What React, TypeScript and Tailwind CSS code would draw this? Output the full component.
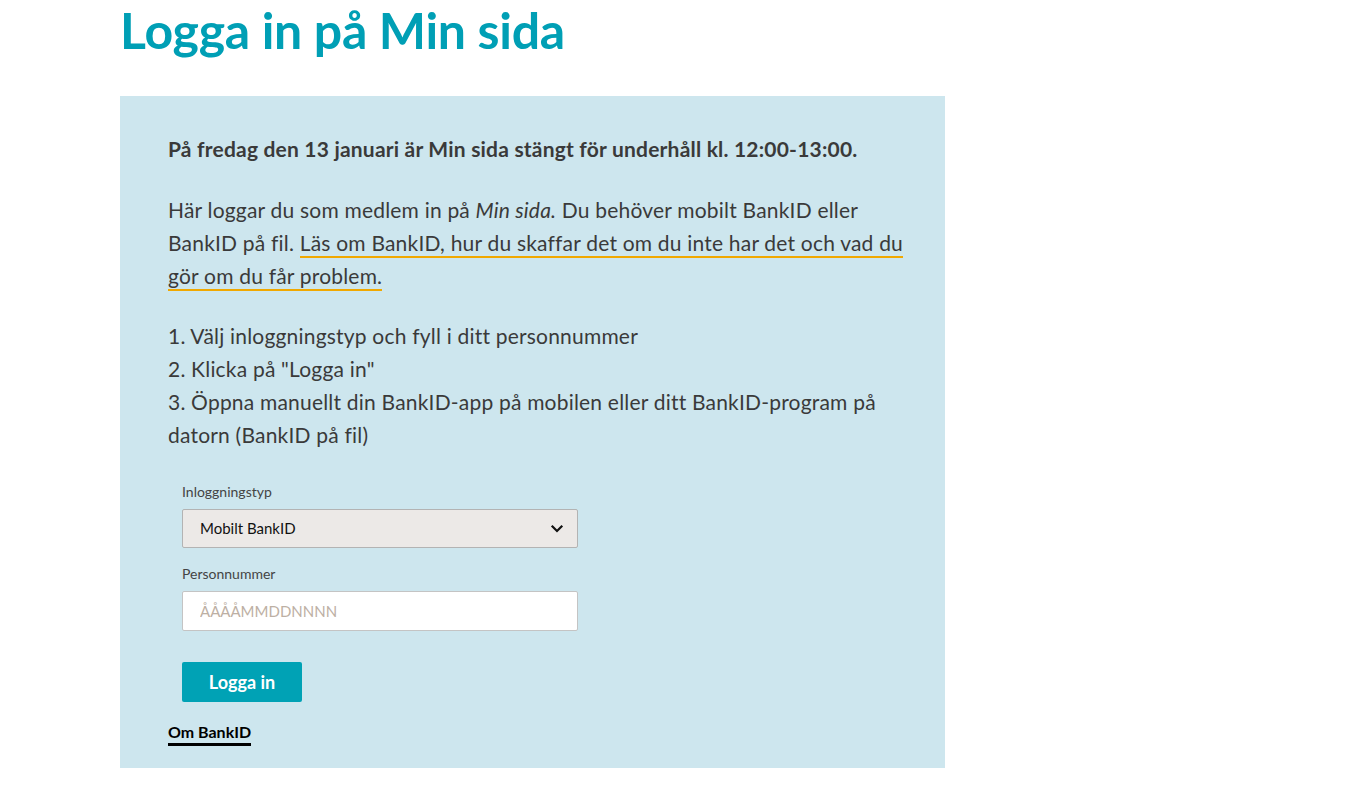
import React, { useEffect, useRef } from 'react';

const font = { fontFamily: 'Lato, "Open Sans", sans-serif' };

const ChevronDown = () => (
  <svg width="14" height="14" viewBox="0 0 14 14" fill="none">
    <path d="M2.5 4.5 7 9l4.5-4.5" stroke="#111" strokeWidth="2.2" strokeLinecap="square" />
  </svg>
);

const App: React.FC = () => {
  const scroller = useRef<HTMLDivElement>(null);

  // the reference is scrolled down a bit past the site header
  useEffect(() => {
    if (scroller.current) scroller.current.scrollTop = 200;
  }, []);

  return (
    <div ref={scroller} className="h-[800px] overflow-y-scroll bg-white" style={font}>
      <div className="h-[1945px]">
        <div className="h-[200px]" />
        <div className="pl-[120px]">
          <h1 className="text-[50px] font-bold leading-[62px] text-[#009fb5] -mt-[1px] tracking-[-0.3px]">
            Logga in på Min sida
          </h1>

          <div className="mt-[35px] w-[825px] bg-[#cde6ee] pl-[48px] pr-[40px] pt-[36px] pb-[22px] text-[#3a3a3a]">
            <p className="text-[21px] font-bold leading-[33px] tracking-[0.2px]">
              På fredag den 13 januari är Min sida stängt för underhåll kl. 12:00-13:00.
            </p>

            <p className="mt-[28px] text-[21px] leading-[33px] tracking-[0.2px]">
              Här loggar du som medlem in på <em>Min sida.</em> Du behöver mobilt BankID eller BankID på fil.{' '}
              <a href="#" className="border-b-2 border-[#f0a800] pb-[1px]">
                Läs om BankID, hur du skaffar det om du inte har det och vad du gör om du får problem.
              </a>
            </p>

            <ol className="mt-[27px] text-[21px] leading-[33px] tracking-[0.2px]">
              <li>1. Välj inloggningstyp och fyll i ditt personnummer</li>
              <li>2. Klicka på "Logga in"</li>
              <li>3. Öppna manuellt din BankID-app på mobilen eller ditt BankID-program på datorn (BankID på fil)</li>
            </ol>

            <form className="mt-[32px] pl-[14px] w-[410px]" onSubmit={(e) => e.preventDefault()}>
              <label className="block text-[14px] leading-[18px] text-[#444]">Inloggningstyp</label>
              <div className="mt-[8px] flex h-[39px] items-center justify-between rounded-[2px] border border-[#b3b3b3] bg-[#ece9e7] pl-[17px] pr-[13px] text-[15px] text-[#111]">
                <span>Mobilt BankID</span>
                <ChevronDown />
              </div>

              <label className="mt-[17px] block text-[14px] leading-[18px] text-[#444]">Personnummer</label>
              <input
                className="mt-[8px] block h-[40px] w-full rounded-[2px] border border-[#c4c4c4] bg-white pl-[17px] text-[15px] outline-none placeholder:text-[#bdb0a4]"
                placeholder="ÅÅÅÅMMDDNNNN"
              />

              <button className="mt-[31px] h-[40px] w-[120px] rounded-[2px] bg-[#00a2b5] text-[18px] font-bold text-white">
                Logga in
              </button>
            </form>

            <a href="#" className="mt-[20px] inline-block border-b-[3px] border-black pb-[1px] text-[16px] font-bold leading-[20px] text-black">
              Om BankID
            </a>
          </div>
        </div>
      </div>
    </div>
  );
};

export default App;
